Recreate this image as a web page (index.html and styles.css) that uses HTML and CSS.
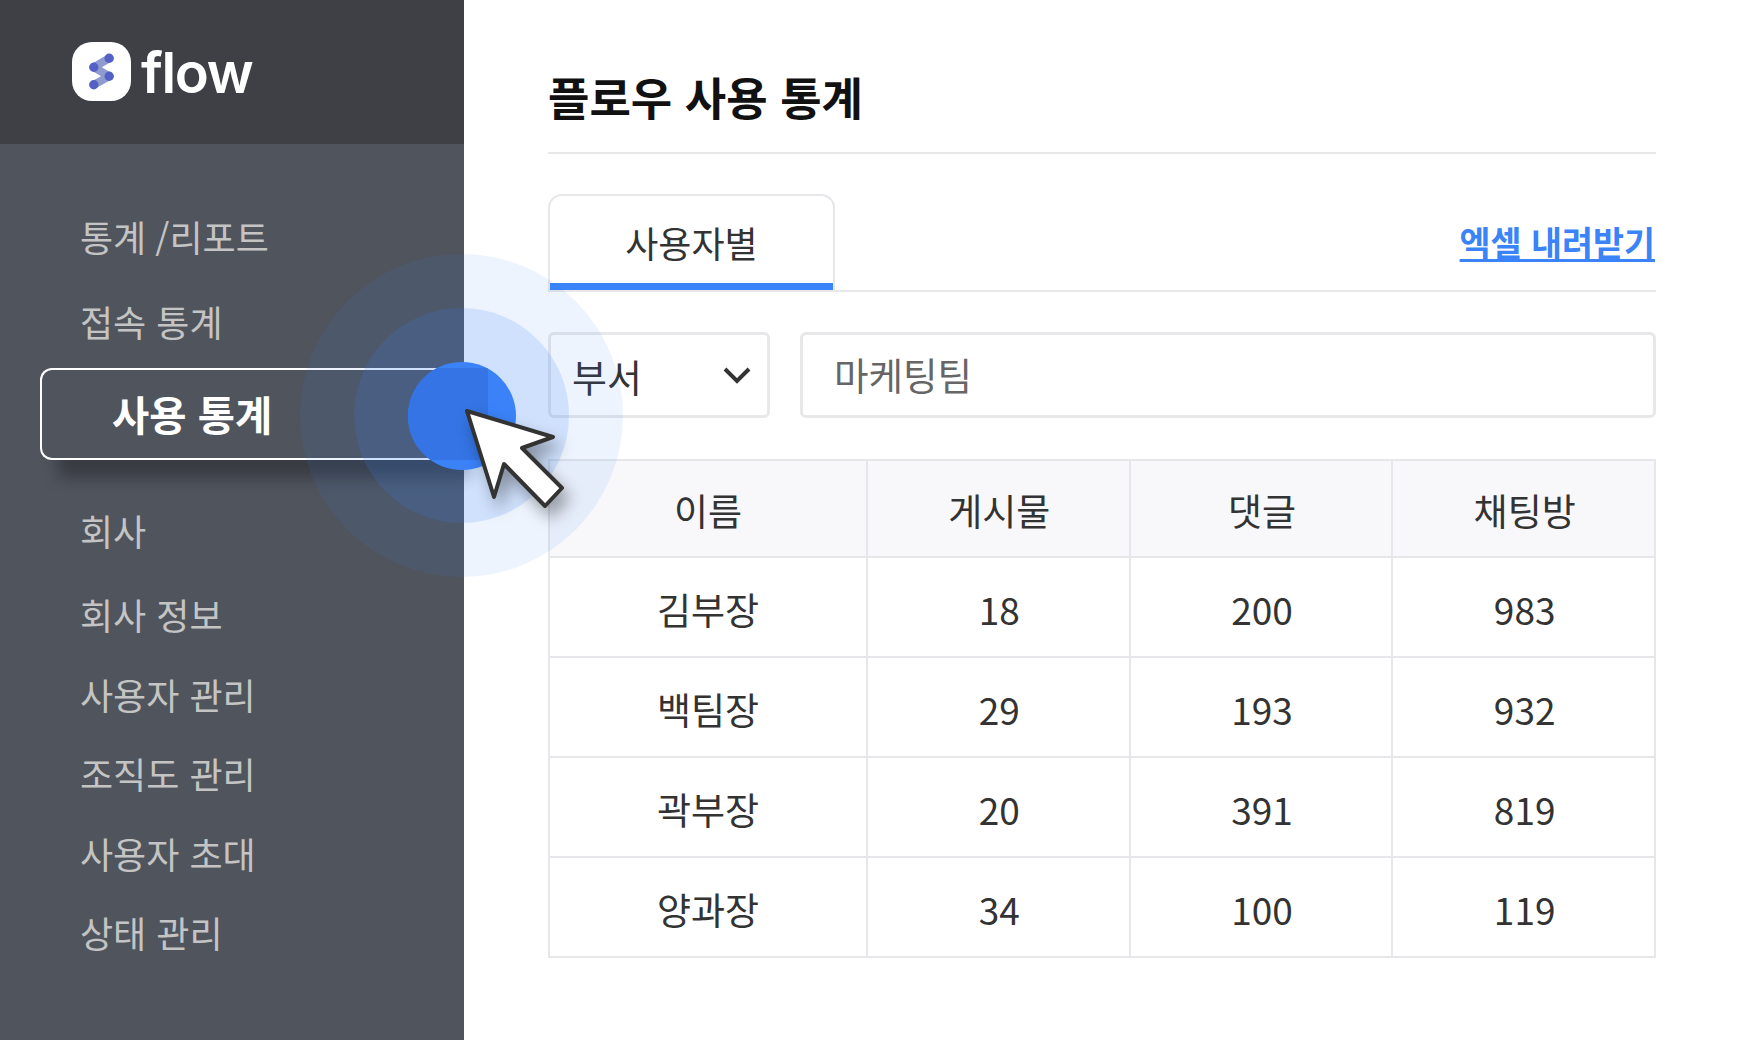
FILE: index.html
```html
<!DOCTYPE html>
<html lang="ko">
<head>
    <meta charset="UTF-8">
    <meta name="viewport" content="width=device-width, initial-scale=1.0">
    <title>플로우 사용 통계</title>
    <link rel="stylesheet" href="styles.css">
</head>
<body>
    <aside class="sidebar">
        <div class="brand">
            <div class="brand-icon">
                <svg width="28" height="40" viewBox="0 0 28 40">
                    <path d="M5.8 15.2 L21.2 6.2 M5.8 32.8 L21.2 24.2 M5.8 15.2 L21.2 24.2" stroke="#8f9bd0" stroke-width="8"/>
                    <circle cx="21.2" cy="6.2" r="4.7" fill="#5560c4"/>
                    <circle cx="5.8" cy="15.2" r="4.7" fill="#5560c4"/>
                    <circle cx="21.2" cy="24.2" r="4.7" fill="#5560c4"/>
                    <circle cx="5.8" cy="32.8" r="4.7" fill="#5560c4"/>
                </svg>
            </div>
            <span class="brand-name">flow</span>
        </div>
        <nav class="menu">
            <div class="menu-title">통계 /리포트</div>
            <a class="menu-sub">접속 통계</a>
            <a class="menu-active">사용 통계</a>
            <div class="menu-title menu-title-gap">회사</div>
            <a class="menu-item">회사 정보</a>
            <a class="menu-item">사용자 관리</a>
            <a class="menu-item">조직도 관리</a>
            <a class="menu-item">사용자 초대</a>
            <a class="menu-item">상태 관리</a>
        </nav>
    </aside>

    <main class="content">
        <h1>플로우 사용 통계</h1>
        <div class="tabs">
            <div class="tab">사용자별</div>
            <a class="excel-link">엑셀 내려받기</a>
        </div>
        <div class="filters">
            <div class="select-box">
                <span>부서</span>
                <svg width="28" height="17" viewBox="0 0 28 17">
                    <path d="M2 2 L14 14 L26 2" fill="none" stroke="#333" stroke-width="4"/>
                </svg>
            </div>
            <div class="search-box">마케팅팀</div>
        </div>
        <table class="stats">
            <thead>
                <tr><th>이름</th><th>게시물</th><th>댓글</th><th>채팅방</th></tr>
            </thead>
            <tbody>
                <tr><td>김부장</td><td>18</td><td>200</td><td>983</td></tr>
                <tr><td>백팀장</td><td>29</td><td>193</td><td>932</td></tr>
                <tr><td>곽부장</td><td>20</td><td>391</td><td>819</td></tr>
                <tr><td>양과장</td><td>34</td><td>100</td><td>119</td></tr>
            </tbody>
        </table>
    </main>

    <div class="pulse">
        <div class="pulse-mid">
            <div class="pulse-core"><div class="pulse-core-shade"></div></div>
        </div>
    </div>
    <svg class="cursor" width="110" height="110" viewBox="0 0 110 110">
        <path d="M6 6 L92 32 L61 43 L101 83 L84 101 L43 59 L33 92 Z" fill="#fff" stroke="#333" stroke-width="4" stroke-linejoin="round"/>
    </svg>
</body>
</html>
```

FILE: styles.css
```css
* {
    box-sizing: border-box;
}
body {
    margin: 0;
    width: 1740px;
    height: 1040px;
    display: flex;
    overflow: hidden;
    position: relative;
    background: white;
    color: #333;
    font-family: "Noto Sans CJK KR", "Noto Sans", sans-serif;
}
.sidebar {
    width: 464px;
    flex-shrink: 0;
    background: #50545d;
}
.brand {
    height: 144px;
    background: #3e4045;
    padding: 42px 0 0 72px;
    display: flex;
    align-items: flex-start;
    gap: 10px;
}
.brand-icon {
    width: 59px;
    height: 59px;
    border-radius: 20px;
    background: white;
    display: flex;
    align-items: center;
    justify-content: center;
}
.brand-name {
    color: white;
    font-family: Inter, sans-serif;
    font-weight: 600;
    font-size: 56px;
    line-height: 62px;
    letter-spacing: -1.3px;
}
.menu {
    display: flex;
    flex-direction: column;
    padding-top: 66px;
}
.menu a, .menu div {
    color: #c4c4c4;
    font-size: 36px;
    line-height: 52px;
    padding-left: 80px;
}
.menu-title:first-child {
    word-spacing: -1px;
}
.menu-sub {
    margin-top: 33px;
}
.menu .menu-active {
    margin: 21px 0 0 40px;
    height: 92px;
    padding-left: 70px;
    color: white;
    font-size: 40.5px;
    font-weight: 700;
    line-height: 88px;
    border: 2px solid white;
    border-right: none;
    border-radius: 12px 0 0 12px;
    box-shadow: 12px 24px 16px -6px rgba(0, 0, 0, 0.3);
}
.menu .menu-title-gap {
    margin-top: 43.5px;
}
.menu-item {
    margin-top: 27.5px;
}
.menu-title-gap + .menu-item {
    margin-top: 32.5px;
}
.content {
    flex: 1;
    padding: 63px 84px 0;
}
h1 {
    margin: 0 0 40px;
    padding-bottom: 21px;
    font-size: 45px;
    line-height: 68px;
    font-weight: 700;
    color: #111;
    border-bottom: 2px solid #e8e8ea;
}
.tabs {
    height: 98px;
    display: flex;
    justify-content: space-between;
    border-bottom: 2px solid #e8e8ea;
}
.tab {
    width: 287px;
    height: 96px;
    text-align: center;
    font-size: 36px;
    line-height: 92px;
    border: 2px solid #e6e7ea;
    border-bottom: none;
    border-radius: 14px 14px 0 0;
    box-shadow: inset 0 -7px 0 #3a83f8;
}
.excel-link {
    align-self: center;
    margin-right: 1px;
    color: #3a83f8;
    font-size: 33.7px;
    font-weight: 700;
    line-height: 50px;
    text-decoration: underline;
    text-underline-offset: 3px;
}
.filters {
    display: flex;
    gap: 30px;
    margin-top: 40px;
}
.select-box, .search-box {
    height: 86px;
    border: 3px solid #e8e8ea;
    border-radius: 6px;
    display: flex;
    align-items: center;
}
.select-box {
    width: 222px;
    padding: 1px 16px 0 21px;
    font-size: 38px;
    justify-content: space-between;
}
.search-box {
    flex: 1;
    padding: 0 0 3px 31px;
    font-size: 37.5px;
    color: #666;
}
.stats {
    width: 100%;
    margin-top: 41px;
    border-collapse: collapse;
    table-layout: fixed;
    font-size: 37px;
}
.stats th, .stats td {
    border: 2px solid #e6e7ea;
    text-align: center;
    font-weight: 400;
    padding: 0;
}
.stats th {
    height: 97px;
    padding: 2px 0 0 2px;
    background: #f8f8fb;
}
.stats td {
    height: 100px;
    padding: 4px 0 0 2px;
}
.stats th:first-child {
    width: 318px;
    padding-left: 0;
}
.stats td:first-child {
    padding-left: 0;
}
.pulse {
    position: absolute;
    left: 300px;
    top: 254px;
    width: 323px;
    height: 323px;
    border-radius: 50%;
    background: rgba(58, 131, 248, 0.09);
    display: flex;
    align-items: center;
    justify-content: center;
}
.pulse-mid {
    width: 215px;
    height: 215px;
    border-radius: 50%;
    background: rgba(58, 131, 248, 0.16);
    display: flex;
    align-items: center;
    justify-content: center;
}
.pulse-core {
    width: 108px;
    height: 108px;
    border-radius: 50%;
    background: #3b82f8;
    overflow: hidden;
    position: relative;
}
.pulse-core-shade {
    position: absolute;
    left: 0;
    top: 6px;
    width: 80px;
    height: 92px;
    background: #3474e4;
}
.cursor {
    position: absolute;
    left: 461px;
    top: 405px;
    filter: drop-shadow(6px 10px 8px rgba(0, 0, 0, 0.35));
}
```
